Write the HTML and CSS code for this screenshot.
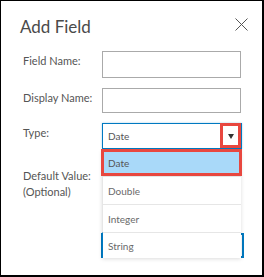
FILE: index.html
```html
<!DOCTYPE html>
<html>
<head>
<meta charset="utf-8">
<link rel="stylesheet" href="styles.css">
</head>
<body>
<div class="dialog">
  <header class="head">
    <h1 class="title">Add Field</h1>
    <span class="close">
      <svg width="13" height="13" viewBox="0 0 13 13"><path d="M0.5 0.5 L12.5 12.5 M12.5 0.5 L0.5 12.5" stroke="#555" stroke-width="1" fill="none"/></svg>
    </span>
  </header>
  <div class="form">
    <label class="lbl">Field Name:</label>
    <div class="input h27"></div>
    <label class="lbl">Display Name:</label>
    <div class="input h25"></div>
    <label class="lbl">Type:</label>
    <div class="select">
      <span class="sel-text">Date</span>
      <span class="arrow"><svg width="6" height="5" viewBox="0 0 6 5"><path d="M0 0 H6 L3 5 Z" fill="#333"/></svg></span>
      <ul class="menu">
        <li class="item first active">Date</li>
        <li class="item">Double</li>
        <li class="item">Integer</li>
        <li class="item last">String</li>
      </ul>
    </div>
    <label class="lbl lbl-default">Default Value:<br>(Optional)</label>
    <div class="default-input"></div>
  </div>
</div>
</body>
</html>
```
FILE: styles.css
```css
html, body {
  margin: 0;
  padding: 0;
  background: #fff;
}
.dialog {
  width: 264px;
  height: 277px;
  box-sizing: border-box;
  border-style: solid;
  border-color: #000;
  border-width: 1px 2px 2px 1px;
  font-family: "Lato", "Open Sans", sans-serif;
  color: #4c4c4c;
  position: relative;
}
.head {
  display: flex;
  justify-content: space-between;
  align-items: flex-start;
  padding: 16px 14px 0 19px;
}
.title {
  margin: 0;
  font-size: 17px;
  line-height: 20px;
  font-weight: 400;
  color: #4a4a4a;
}
.close {
  display: block;
  margin-top: 1px;
  width: 13px;
  height: 13px;
}
.close svg { display: block; }
.form {
  display: grid;
  grid-template-columns: 79px 140px;
  row-gap: 10px;
  margin-top: 14px;
  padding-left: 22px;
}
.lbl {
  font-size: 11px;
  line-height: 16px;
  padding-top: 2px;
  color: #555;
}
.lbl-default { padding-top: 9px; }
.input {
  width: 139px;
  box-sizing: border-box;
  border: 1px solid #aaa;
  background: #fff;
}
.h27 { height: 27px; }
.h25 { height: 25px; }
.select {
  position: relative;
  width: 140px;
  height: 26px;
  box-sizing: border-box;
  border: 1px solid #0079c1;
  box-shadow: 0 0 2px rgba(0,121,193,0.35);
  display: flex;
  align-items: center;
  padding-left: 5px;
  font-size: 10px;
  color: #555;
  z-index: 2;
}
.arrow {
  position: absolute;
  top: -1px;
  right: 0;
  width: 21px;
  height: 25px;
  box-sizing: border-box;
  border: 3px solid #e8473f;
  background: #fff;
  display: flex;
  align-items: center;
  justify-content: center;
  padding-top: 1px;
}
.arrow svg { display: block; }
.menu {
  position: absolute;
  left: -1px;
  top: 26px;
  width: 139px;
  margin: 0;
  padding: 0;
  list-style: none;
  background: #fff;
  box-shadow: 0 1px 4px rgba(0,0,0,0.14);
}
.item {
  height: 28px;
  box-sizing: border-box;
  border-top: 1px solid #e6e6e6;
  border-left: 1px solid #e6e6e6;
  padding-left: 5px;
  display: flex;
  align-items: center;
  font-size: 10px;
  color: #6a6a6a;
  position: relative;
}
.item.first {
  height: 26px;
  border-top: none;
}
.item.last {
  height: 26px;
  border-left-color: #0079c1;
}
.item.active {
  background: #a9d9f9;
  color: #555;
}
.item.active::after {
  content: "";
  position: absolute;
  left: -2px;
  right: -1px;
  top: -1px;
  bottom: 0;
  border: 3px solid #e8473f;
}
.default-input {
  margin-top: 74px;
  margin-left: -1px;
  width: 143px;
  height: 25px;
  box-sizing: border-box;
  border: 2px solid #0079c1;
  border-left-width: 1px;
}
```
